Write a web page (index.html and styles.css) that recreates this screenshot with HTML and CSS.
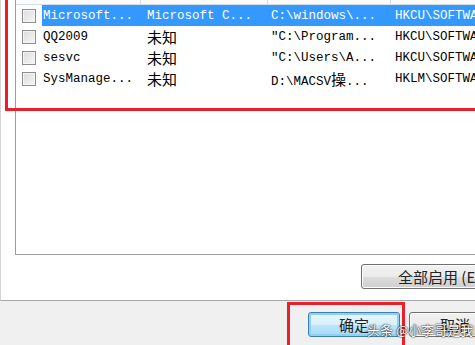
FILE: index.html
```html
<!DOCTYPE html>
<html lang="zh-CN">
<head>
  <meta charset="UTF-8">
  <title>启动项</title>
  <link rel="stylesheet" href="styles.css">
</head>
<body>

  <div class="dialog">
    <div class="panel">
      <div class="list">
        <div class="list-head">
          <span class="col-sep sep1"></span>
          <span class="col-sep sep2"></span>
          <span class="col-sep sep3"></span>
        </div>

        <div class="row">
          <span class="check"></span>
          <div class="cells selected">
            <span>Microsoft...</span>
            <span>Microsoft C...</span>
            <span>C:\windows\...</span>
            <span>HKCU\SOFTWARE\Microsoft</span>
          </div>
        </div>
        <div class="row">
          <span class="check"></span>
          <div class="cells">
            <span>QQ2009</span>
            <span class="cn">未知</span>
            <span>"C:\Program...</span>
            <span>HKCU\SOFTWARE\Microsoft</span>
          </div>
        </div>
        <div class="row">
          <span class="check"></span>
          <div class="cells">
            <span>sesvc</span>
            <span class="cn">未知</span>
            <span>"C:\Users\A...</span>
            <span>HKCU\SOFTWARE\Microsoft</span>
          </div>
        </div>
        <div class="row">
          <span class="check"></span>
          <div class="cells">
            <span>SysManage...</span>
            <span class="cn">未知</span>
            <span>D:\MACSV<span class="cn">操</span>...</span>
            <span>HKLM\SOFTWARE\Microsoft</span>
          </div>
        </div>
      </div>

      <div class="panel-actions">
        <button class="btn btn-wide">全部启用 (E)</button>
      </div>
    </div>

    <div class="footer">
      <button class="btn btn-default">确定</button>
      <button class="btn">取消</button>
    </div>

    <!-- 标注框 -->
    <div class="mark mark-list"></div>
    <div class="mark mark-ok"></div>

    <div class="watermark">头条 @小李哥是我</div>
  </div>

</body>
</html>
```

FILE: styles.css
```css
html, body {
  margin: 0;
  padding: 0;
  overflow: hidden;
  background-color: #f0f0f0;
}
.dialog {
  position: relative;
  width: 475px;
  height: 345px;
  overflow: hidden;
  font-family: 'Liberation Mono', 'Noto Sans CJK SC', monospace;
  font-size: 12.5px;
  color: #000;
}
.panel {
  height: 300px;
  background: #fff;
  border-left: 1px solid #d4d4d4;
  border-bottom: 1px solid #a8a8a8;
}
.list {
  position: relative;
  margin-left: 14px;
  height: 254px;
  border-left: 1px solid #9c9c9c;
  border-bottom: 1px solid #9c9c9c;
  background: #fff;
}
.list-head {
  height: 4px;
  border-bottom: 1px solid #d5dde6;
  background: #fbfbfb;
}
.col-sep {
  position: absolute;
  top: 0;
  height: 5px;
  border-left: 1px solid #d8dde3;
}
.sep1 { left: 124px; }
.sep2 { left: 251px; }
.sep3 { left: 374px; }

.row {
  display: flex;
  align-items: center;
  height: 21px;
}
.check {
  flex: none;
  width: 12px;
  height: 12px;
  margin-left: 6px;
  margin-right: 6px;
  border: 1px solid #8e8e8e;
  background: linear-gradient(135deg, #dcdcdc, #f6f6f6);
  box-shadow: inset 0 0 0 1px #f4f4f4;
}
.cells {
  display: grid;
  grid-template-columns: 104px 124px 124px 1fr;
  align-items: center;
  flex: 1;
  height: 21px;
  padding-left: 1px;
  white-space: nowrap;
}
.cells > span {
  overflow: hidden;
}
.cells.selected {
  background-color: #3399ff;
  color: #fff;
}
.cn {
  font-family: 'Noto Sans CJK SC', sans-serif;
  font-size: 15px;
}

.panel-actions {
  display: flex;
  padding-top: 9px;
  padding-left: 360px;
}
.btn {
  flex: none;
  height: 25px;
  padding: 0;
  font-family: 'Noto Sans CJK SC', sans-serif;
  font-size: 15px;
  line-height: 1;
  color: #222;
  border: 1px solid #707070;
  border-radius: 3px;
  background: linear-gradient(#f2f2f2 0%, #ebebeb 50%, #dddddd 51%, #cfcfcf 100%);
  box-shadow: inset 0 0 0 1px #fcfcfc;
}
.btn-wide {
  width: 124px;
  text-align: left;
  padding-left: 36px;
}
.footer {
  display: flex;
  gap: 9px;
  padding-top: 11px;
  padding-left: 308px;
}
.footer .btn {
  width: 92px;
}
.btn-default {
  border-color: #3c7fb1;
  background: linear-gradient(#eaf6fd 0%, #d9f0fc 50%, #bee6fd 51%, #a7d9f5 100%);
  box-shadow: inset 0 0 0 2px #8fd0f3;
}

.mark {
  position: absolute;
  border: 3px solid #e6212b;
}
.mark-list {
  left: 5px;
  top: -20px;
  right: -20px;
  height: 128px;
  border-top: none;
}
.mark-ok {
  left: 287px;
  top: 302px;
  width: 112px;
  height: 60px;
}
.watermark {
  position: absolute;
  left: 367px;
  top: 320px;
  font-family: 'Noto Sans CJK SC', sans-serif;
  font-size: 13px;
  color: #fff;
  text-shadow: 0 0 2px rgba(0,0,0,0.85), 0 0 1px rgba(0,0,0,0.9);
  white-space: nowrap;
}
```
